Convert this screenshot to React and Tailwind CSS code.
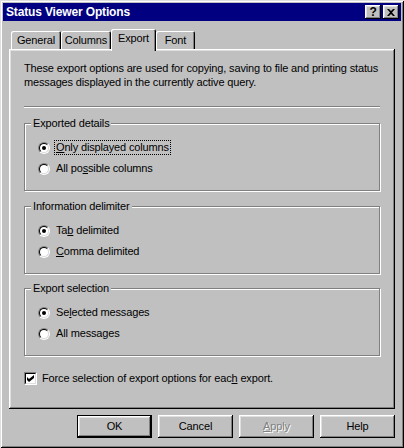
import React from 'react';

const bevel =
  'shadow-[inset_-1px_-1px_#000,inset_1px_1px_#fff,inset_-2px_-2px_#808080,inset_2px_2px_#dfdfdf]';

function TitleButton({ children }) {
  return (
    <div
      className={`flex h-[14px] w-[16px] items-center justify-center bg-[#c0c0c0] ${bevel}`}
    >
      {children}
    </div>
  );
}

function Radio({ checked }) {
  return (
    <div className="flex h-[12px] w-[12px] shrink-0 rounded-full border border-t-[#808080] border-l-[#808080] border-r-white border-b-white">
      <div className="flex flex-1 items-center justify-center rounded-full border border-t-black border-l-black border-r-[#dfdfdf] border-b-[#dfdfdf] bg-white">
        {checked && <div className="h-[4px] w-[4px] rounded-full bg-black" />}
      </div>
    </div>
  );
}

function RadioRow({ checked, focused, children }) {
  return (
    <div className="flex h-[21px] items-center gap-[4px]">
      <Radio checked={checked} />
      <span
        className={`border px-[1px] leading-[13px] ${
          focused ? 'border-dotted border-black' : 'border-transparent'
        }`}
      >
        {children}
      </span>
    </div>
  );
}

function GroupBox({ title, className = '', children }) {
  return (
    <fieldset
      className={`border border-[#808080] pb-[11px] shadow-[inset_1px_1px_#fff,1px_1px_#fff] ${className}`}
    >
      <legend className="ml-[6px] bg-[#c0c0c0] px-[2px] leading-[14px]">
        {title}
      </legend>
      <div className="flex flex-col pl-[13px] pt-[7px]">{children}</div>
    </fieldset>
  );
}

function Tab({ label, selected, width }) {
  return (
    <div
      className={classTab(selected)}
      style={{ width }}
    >
      {label}
    </div>
  );
}

function classTab(selected) {
  return selected
    ? 'relative z-10 -mb-[2px] flex h-[22px] items-center justify-center rounded-t-[2px] bg-[#c0c0c0] pb-[3px] shadow-[inset_1px_1px_#fff,inset_-1px_0_#000,inset_-2px_0_#808080]'
    : 'flex h-[18px] items-center justify-center rounded-t-[2px] bg-[#c0c0c0] shadow-[inset_1px_1px_#fff,inset_-1px_0_#000,inset_-2px_0_#808080]';
}

function Button({ children, isDefault, disabled }) {
  return (
    <div
      className={`flex h-[23px] w-[75px] items-center justify-center bg-[#c0c0c0] ${bevel} ${
        isDefault ? 'border border-black' : ''
      } ${disabled ? 'text-[#808080] [text-shadow:1px_1px_0_#fff]' : ''}`}
    >
      {children}
    </div>
  );
}

export default function App() {
  return (
    <div className="flex h-[448px] w-[404px] flex-col bg-[#c0c0c0] p-[3px] font-['Liberation_Sans',Arial,sans-serif] text-[11px] tracking-[-0.15px] text-black shadow-[inset_1px_1px_#dfdfdf,inset_-1px_-1px_#000,inset_2px_2px_#fff,inset_-2px_-2px_#808080]">
      {/* title bar */}
      <div className="flex h-[18px] items-center justify-between bg-[#000080] pl-[3px] pr-[2px]">
        <span className="text-[12px] font-bold text-white">
          Status Viewer Options
        </span>
        <div className="flex gap-[2px]">
          <TitleButton>
            <span className="text-[12px] font-bold leading-none">?</span>
          </TitleButton>
          <TitleButton>
            <svg width="8" height="7" viewBox="0 0 8 7">
              <path d="M0 0h2l2 2 2-2h2L5 3.5 8 7H6L4 5 2 7H0l3-3.5z" fill="#000" />
            </svg>
          </TitleButton>
        </div>
      </div>

      <div className="mt-[8px] flex flex-col px-[6px]">
        {/* tabs */}
        <div className="flex h-[20px] items-end pl-[2px]">
          <Tab label="General" width={50} />
          <Tab label="Columns" width={50} />
          <Tab label="Export" width={45} selected />
          <Tab label="Font" width={39} />
        </div>

        {/* panel */}
        <div className="flex h-[360px] flex-col px-[15px] pt-[12px] shadow-[inset_-1px_-1px_#000,inset_1px_1px_#fff,inset_-2px_-2px_#808080,inset_2px_2px_#dfdfdf]">
          <p className="whitespace-nowrap leading-[14px]">
            These export options are used for copying, saving to file and printing status
            <br />
            messages displayed in the currently active query.
          </p>
          <div className="mt-[17px] h-[2px] border-t border-b border-t-[#808080] border-b-white" />

          <GroupBox title="Exported details" className="mt-[8px]">
            <RadioRow checked focused>
              <span className="underline">O</span>nly displayed columns
            </RadioRow>
            <RadioRow>
              All po<span className="underline">s</span>sible columns
            </RadioRow>
          </GroupBox>

          <GroupBox title="Information delimiter" className="mt-[8px]">
            <RadioRow checked>
              Ta<span className="underline">b</span> delimited
            </RadioRow>
            <RadioRow>
              <span className="underline">C</span>omma delimited
            </RadioRow>
          </GroupBox>

          <GroupBox title="Export selection" className="mt-[7px]">
            <RadioRow checked>
              Se<span className="underline">l</span>ected messages
            </RadioRow>
            <RadioRow>All messages</RadioRow>
          </GroupBox>

          <div className="mt-[14px] flex items-center gap-[5px]">
            <div className="flex h-[13px] w-[13px] shrink-0 border border-t-[#808080] border-l-[#808080] border-r-white border-b-white">
              <div className="flex flex-1 items-center justify-center border border-t-black border-l-black border-r-[#dfdfdf] border-b-[#dfdfdf] bg-white">
                <svg width="7" height="7" viewBox="0 0 7 7">
                  <path d="M0 2l2 2 5-4v3L2 7 0 5z" fill="#000" />
                </svg>
              </div>
            </div>
            <span>
              Force selection of export options for eac
              <span className="underline">h</span> export.
            </span>
          </div>
        </div>

        {/* buttons */}
        <div className="mt-[6px] flex justify-end gap-[6px]">
          <Button isDefault>OK</Button>
          <Button>Cancel</Button>
          <Button disabled>
            <span>
              <span className="underline">A</span>pply
            </span>
          </Button>
          <Button>Help</Button>
        </div>
      </div>
    </div>
  );
}
